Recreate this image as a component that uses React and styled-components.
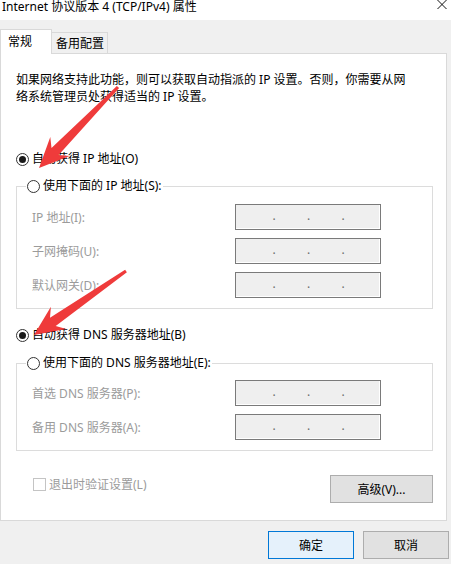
import styled, { createGlobalStyle } from "styled-components";

const GlobalStyle = createGlobalStyle`
  html, body {
    margin: 0;
    padding: 0;
    background: #f0f0f0;
  }
  body {
    font-family: "Noto Sans", "Noto Sans CJK SC", sans-serif;
    font-size: 12px;
    color: #000;
  }
  * { box-sizing: border-box; }
`;

const arrows = [
    { tail: [118, 87], tip: [39, 168] },
    { tail: [126, 271], tip: [34, 335] },
]

// red annotation arrow: thin tail, widening shaft, barbed head
const arrowPoints = ({ tail, tip }) => {
    const [tx, ty] = tail
    const [px, py] = tip
    const len = Math.hypot(px - tx, py - ty)
    const ux = (px - tx) / len
    const uy = (py - ty) / len
    const nx = -uy
    const ny = ux
    const bx = px - ux * 23
    const by = py - uy * 23
    const wx = px - ux * 30
    const wy = py - uy * 30
    const pts = [
        [tx + nx * 1.5, ty + ny * 1.5],
        [bx + nx * 5, by + ny * 5],
        [wx + nx * 13.5, wy + ny * 13.5],
        [px, py],
        [wx - nx * 13.5, wy - ny * 13.5],
        [bx - nx * 5, by - ny * 5],
        [tx - nx * 1.5, ty - ny * 1.5],
    ]
    return pts.map(p => p.map(v => v.toFixed(1)).join(',')).join(' ')
}

const Radio = ({ checked, children }) => (
    <RadioRow>
        <RadioCircle>{checked ? <RadioDot /> : null}</RadioCircle>
        <span>{children}</span>
    </RadioRow>
)

const IpRow = ({ label }) => (
    <FieldRow>
        <FieldLabel>{label}</FieldLabel>
        <IpBox>
            <Octet /><IpDot>.</IpDot>
            <Octet /><IpDot>.</IpDot>
            <Octet /><IpDot>.</IpDot>
            <Octet />
        </IpBox>
    </FieldRow>
)

const App = () => {
    return (
        <>
            <GlobalStyle />
            <Window>
                <TitleBar>
                    <Title>Internet 协议版本 4 (TCP/IPv4) 属性</Title>
                    <svg width="10" height="9" viewBox="0 0 10 9">
                        <path d="M0.5 0 L9.5 9 M9.5 0 L0.5 9" stroke="#111" strokeWidth="1" fill="none" />
                    </svg>
                </TitleBar>

                <TabStrip>
                    <Tab $active>常规</Tab>
                    <Tab>备用配置</Tab>
                </TabStrip>

                <Panel>
                    <Intro>
                        如果网络支持此功能，则可以获取自动指派的 IP 设置。否则，你需要从网<br />
                        络系统管理员处获得适当的 IP 设置。
                    </Intro>

                    <Spaced $top={46}>
                        <Radio checked>自动获得 IP 地址(O)</Radio>
                    </Spaced>

                    <GroupBox $top={11} $padTop={10}>
                        <Legend><Radio>使用下面的 IP 地址(S):</Radio></Legend>
                        <IpRow label="IP 地址(I):" />
                        <IpRow label="子网掩码(U):" />
                        <IpRow label="默认网关(D):" />
                    </GroupBox>

                    <Spaced $top={18}>
                        <Radio checked>自动获得 DNS 服务器地址(B)</Radio>
                    </Spaced>

                    <GroupBox $top={12} $padTop={9}>
                        <Legend><Radio>使用下面的 DNS 服务器地址(E):</Radio></Legend>
                        <IpRow label="首选 DNS 服务器(P):" />
                        <IpRow label="备用 DNS 服务器(A):" />
                    </GroupBox>

                    <BottomRow>
                        <CheckRow>
                            <CheckBox />
                            <span>退出时验证设置(L)</span>
                        </CheckRow>
                        <Button $width={103}>高级(V)...</Button>
                    </BottomRow>
                </Panel>

                <DialogButtons>
                    <Button $width={86} $primary>确定</Button>
                    <Button $width={86}>取消</Button>
                </DialogButtons>

                <Overlay width="451" height="564" viewBox="0 0 451 564">
                    {arrows.map((a, i) => (
                        <polygon key={i} points={arrowPoints(a)} fill="#ef3b3b" />
                    ))}
                </Overlay>
            </Window>
        </>
    )
}

const Window = styled.div`
    position: relative;
    width: 451px;
    height: 564px;
    overflow: hidden;
    background: #f0f0f0;
    display: flex;
    flex-direction: column;
`;

const TitleBar = styled.div`
    height: 20px;
    flex-shrink: 0;
    background: #fff;
    display: flex;
    justify-content: space-between;
    align-items: flex-start;
    padding: 0 4px 0 2px;
`;

const Title = styled.span`
    line-height: 14px;
    white-space: nowrap;
`;

const TabStrip = styled.div`
    height: 34px;
    flex-shrink: 0;
    margin-bottom: -1px;
    display: flex;
    align-items: flex-end;
    position: relative;
    z-index: 1;
`;

const Tab = styled.div`
    display: flex;
    align-items: center;
    white-space: nowrap;
    border-top: 1px solid #d9d9d9;
    border-right: 1px solid #d9d9d9;
    border-left: ${p => p.$active ? '1px solid #d9d9d9' : 'none'};
    background: ${p => p.$active ? '#fff' : '#f0f0f0'};
    height: ${p => p.$active ? '25px' : '21px'};
    width: ${p => p.$active ? '52px' : '56px'};
    margin-bottom: ${p => p.$active ? '0' : '1px'};
    padding: ${p => p.$active ? '0 0 2px 7px' : '0 0 0 4px'};
`;

const Panel = styled.div`
    width: 447px;
    height: 468px;
    flex-shrink: 0;
    background: #fff;
    border: 1px solid #d9d9d9;
    padding: 17px 13px 0 15px;
    display: flex;
    flex-direction: column;
`;

const Intro = styled.p`
    margin: 0;
    line-height: 17px;
    white-space: nowrap;
`;

const Spaced = styled.div`
    margin-top: ${p => p.$top}px;
`;

const RadioRow = styled.div`
    display: flex;
    align-items: center;
    gap: 3px;
    height: 16px;
    line-height: 16px;
    white-space: nowrap;
`;

const RadioCircle = styled.span`
    width: 13px;
    height: 13px;
    border-radius: 50%;
    border: 1px solid #333;
    background: #fff;
    display: flex;
    align-items: center;
    justify-content: center;
    flex-shrink: 0;
`;

const RadioDot = styled.span`
    width: 7px;
    height: 7px;
    border-radius: 50%;
    background: #1a1a1a;
`;

const GroupBox = styled.fieldset`
    margin: ${p => p.$top}px 0 0 0;
    min-width: 0;
    border: 1px solid #dcdcdc;
    padding: ${p => p.$padTop}px 51px 10px 15px;
    display: flex;
    flex-direction: column;
    gap: 8px;
`;

const Legend = styled.legend`
    padding: 0 1px;
    margin-left: -6px;
    background: #fff;
`;

const FieldRow = styled.div`
    display: flex;
    align-items: center;
    justify-content: space-between;
    height: 26px;
`;

const FieldLabel = styled.span`
    color: #9b9b9b;
    white-space: nowrap;
`;

const IpBox = styled.div`
    width: 146px;
    height: 26px;
    border: 1px solid #7a7a7a;
    background: #efefef;
    box-shadow: inset -1px -1px 0 #fff;
    display: flex;
    align-items: center;
    padding: 0 0 3px 5px;
`;

const Octet = styled.span`
    width: 31.5px;
    flex-shrink: 0;
`;

const IpDot = styled.span`
    width: 3px;
    line-height: 12px;
    color: #6d6d6d;
`;

const BottomRow = styled.div`
    margin-top: 24px;
    display: flex;
    align-items: flex-start;
    justify-content: space-between;
    padding-left: 17px;
`;

const CheckRow = styled.div`
    display: flex;
    align-items: center;
    gap: 3px;
    margin-top: 1px;
    height: 16px;
    color: #9b9b9b;
    white-space: nowrap;
`;

const CheckBox = styled.span`
    width: 13px;
    height: 13px;
    border: 1px solid #c4c4c4;
    background: #fff;
`;

const Button = styled.div`
    width: ${p => p.$width}px;
    height: 28px;
    flex-shrink: 0;
    display: flex;
    align-items: center;
    justify-content: center;
    white-space: nowrap;
    background: ${p => p.$primary ? '#e5f1fb' : '#e1e1e1'};
    border: 1px solid ${p => p.$primary ? '#0078d7' : '#adadad'};
`;

const DialogButtons = styled.div`
    margin-top: 10px;
    display: flex;
    justify-content: flex-end;
    gap: 9px;
    padding-right: 2px;
`;

const Overlay = styled.svg`
    position: absolute;
    top: 0;
    left: 0;
    pointer-events: none;
`;

export default App
